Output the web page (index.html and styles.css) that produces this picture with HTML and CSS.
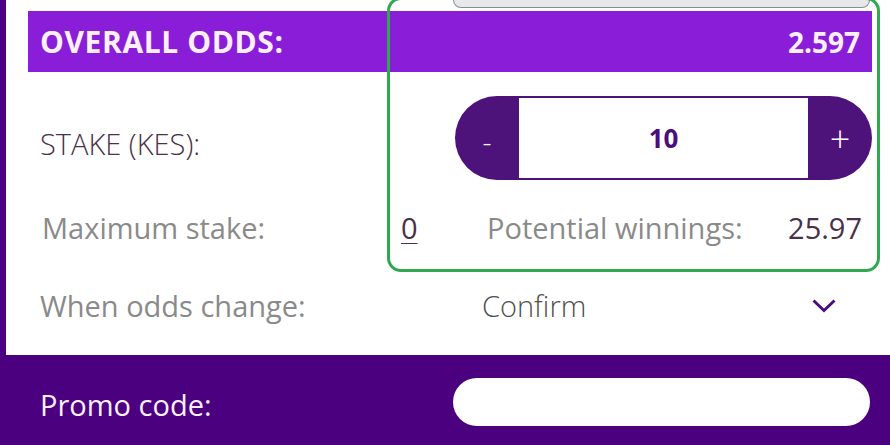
FILE: index.html
```html
<!DOCTYPE html>
<html lang="en">
<head>
  <meta charset="UTF-8">
  <title>Bet Slip</title>
  <link rel="stylesheet" href="styles.css">
</head>
<body>

  <div class="slip">
    <div class="slip-body">
      <div class="prev-tab"></div>

      <div class="odds-bar">
        <span class="odds-label">OVERALL ODDS:</span>
        <span>2.597</span>
      </div>

      <div class="stake-row">
        <span class="stake-label">STAKE (KES):</span>
        <div class="stepper">
          <button class="step-btn minus">-</button>
          <div class="step-value">10</div>
          <button class="step-btn plus">+</button>
        </div>
      </div>

      <div class="stats-row">
        <span class="muted max-label">Maximum stake:</span>
        <span class="max-value"><u>0</u></span>
        <span class="muted">Potential winnings:</span>
        <span class="win-value">25.97</span>
      </div>

      <div class="change-row">
        <span class="muted change-label">When odds change:</span>
        <span class="confirm">Confirm</span>
        <svg class="chevron" width="24" height="14" viewBox="0 0 24 14">
          <polyline points="1.5,1.5 12,11.5 22.5,1.5" fill="none" stroke="#4a0e7c" stroke-width="3"/>
        </svg>
      </div>

      <div class="highlight"></div>
    </div>

    <div class="promo">
      <span class="promo-label">Promo code:</span>
      <input class="promo-input" type="text">
    </div>
  </div>

</body>
</html>
```

FILE: styles.css
```css
body {
  margin: 0;
  font-family: "Open Sans", "Liberation Sans", sans-serif;
  background: #fff;
  overflow: hidden;
}

.slip-body {
  position: relative;
  border-left: 6px solid #4b0082;
  padding: 0 18px 19px 22px;
  background: #fff;
}

.prev-tab {
  margin-left: auto;
  margin-right: 2px;
  width: 415px;
  height: 7px;
  background: #e7e8ec;
  border: 1px solid #8c8c8c;
  border-top: none;
  border-radius: 0 0 8px 8px;
  margin-bottom: 3px;
}

.odds-bar {
  display: flex;
  justify-content: space-between;
  align-items: center;
  height: 61px;
  padding: 0 12px;
  background: #8a1ed8;
  color: #fdf0fd;
  font-size: 28px;
  font-weight: 700;
}

.odds-label {
  font-size: 30px;
  letter-spacing: 0.6px;
}

.stake-row {
  display: flex;
  justify-content: space-between;
  align-items: center;
  padding: 24px 0 0 12px;
}

.stake-label {
  font-size: 29px;
  font-weight: 300;
  color: #4a3048;
  margin-top: 10px;
}

.stepper {
  display: flex;
  width: 417px;
  height: 84px;
}

.step-btn {
  width: 64px;
  border: none;
  background: #4e137a;
  color: #fff;
  font-family: inherit;
  font-weight: 300;
  padding: 0;
}

.minus {
  border-radius: 42px 0 0 42px;
  font-size: 28px;
  padding-top: 6px;
}

.plus {
  border-radius: 0 42px 42px 0;
  font-size: 36px;
}

.step-value {
  flex: 1;
  display: flex;
  align-items: center;
  justify-content: center;
  border-top: 2px solid #4e137a;
  border-bottom: 2px solid #4e137a;
  color: #4a0e7c;
  font-size: 26px;
  font-weight: 700;
}

.stats-row,
.change-row {
  display: flex;
  align-items: center;
  font-size: 29px;
}

.stats-row {
  height: 94px;
  padding: 0 10px 0 14px;
}

.muted {
  color: #8a8a8a;
}

.max-label {
  width: 359px;
}

.max-value {
  width: 86px;
  color: #4a3048;
}

.max-value u {
  text-underline-offset: 4px;
  text-decoration-thickness: 1px;
}

.win-value {
  margin-left: auto;
  color: #4a3048;
}

.change-row {
  height: 62px;
  padding: 0 0 0 12px;
}

.change-label {
  width: 442px;
}

.confirm {
  font-weight: 300;
  color: #505050;
}

.chevron {
  margin-left: auto;
  margin-right: 36px;
  margin-top: 2px;
}

.highlight {
  position: absolute;
  left: 381px;
  top: -3px;
  width: 487px;
  height: 269px;
  border: 3.5px solid #2fa84f;
  border-radius: 14px;
  pointer-events: none;
}

.promo {
  display: flex;
  justify-content: space-between;
  align-items: center;
  padding: 23px 20px 20px 40px;
  background: #4b007f;
}

.promo-label {
  color: #fdf0fd;
  font-size: 29px;
  margin-top: 4px;
}

.promo-input {
  width: 417px;
  height: 48px;
  box-sizing: border-box;
  border: none;
  border-radius: 24px;
  background: #fff;
}
```
